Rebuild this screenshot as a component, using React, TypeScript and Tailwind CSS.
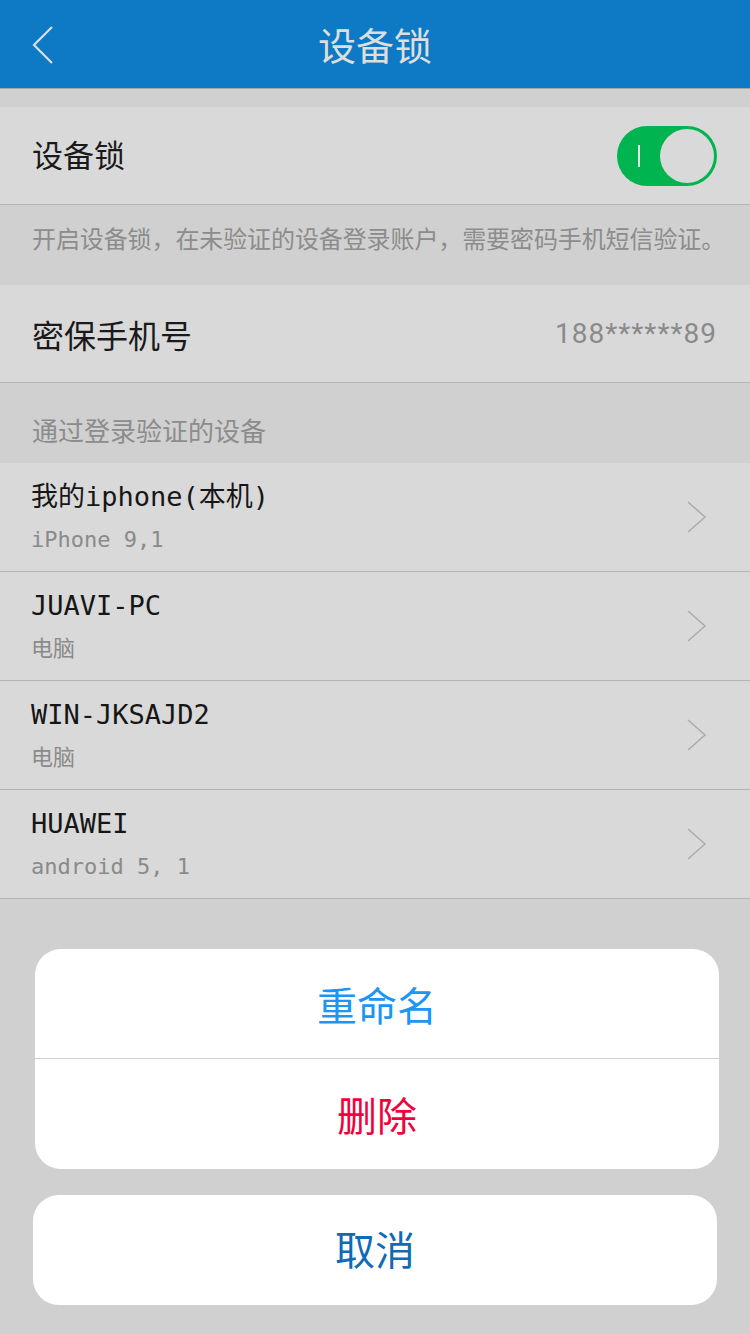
import React from 'react';

interface Device {
    name: string;
    model: string;
}

const devices: Device[] = [
    { name: '我的iphone(本机)', model: 'iPhone 9,1' },
    { name: 'JUAVI-PC', model: '电脑' },
    { name: 'WIN-JKSAJD2', model: '电脑' },
    { name: 'HUAWEI', model: 'android 5, 1' },
];

const cjk = "font-['Noto_Sans_CJK_SC',sans-serif]";
const mono = "font-['DejaVu_Sans_Mono','Noto_Sans_CJK_SC',monospace]";

const Chevron = () => (
    <svg width="22" height="32" viewBox="0 0 22 32" fill="none">
        <path d="M2 1 L19 16 L2 31" stroke="#ababab" strokeWidth="1.5" />
    </svg>
);

const Toggle = () => (
    <div className="relative w-[100px] h-[60px] rounded-full bg-[#00b44f]">
        <div className="absolute left-[21px] top-[19px] w-[2px] h-[22px] bg-[#e6e6e6]" />
        <div className="absolute right-[3px] top-[3px] w-[54px] h-[54px] rounded-full bg-[#d9d9d9]" />
    </div>
);

const App = () => {
    return (
        <div className={`w-[750px] h-[1334px] bg-[#d0d0d0] ${cjk} overflow-hidden`}>
            {/* header */}
            <div className="relative h-[89px] bg-[#0e7ac5] border-b border-[#a8a8a8] flex items-center justify-center">
                <svg className="absolute left-[30px] top-[26px]" width="26" height="38" viewBox="0 0 26 38" fill="none">
                    <path d="M22 1 L4 19 L22 37" stroke="#dedede" strokeWidth="2.2" />
                </svg>
                <span className="text-[38px] text-[#dedede] leading-none">设备锁</span>
            </div>

            <div className="h-[18px]" />

            <div className="h-[98px] bg-[#d9d9d9] border-b border-[#b3b3b3] flex items-center justify-between pl-[32px] pr-[33px]">
                <span className="text-[31px] text-[#1a1a1a] -mt-[3px]">设备锁</span>
                <Toggle />
            </div>

            <div className="h-[80px] pl-[32px] pt-[15px]">
                <p className="text-[24px] text-[#8c8c8c] whitespace-nowrap tracking-[-0.1px]">
                    开启设备锁，在未验证的设备登录账户，需要密码手机短信验证。
                </p>
            </div>

            <div className="h-[98px] bg-[#d9d9d9] border-b border-[#b3b3b3] flex items-center justify-between pl-[32px] pr-[33px]">
                <span className="text-[32px] text-[#1a1a1a]">密保手机号</span>
                <span className="text-[28px] text-[#8a8a8a] font-['Roboto',sans-serif] tracking-[1px]">188******89</span>
            </div>

            <div className="h-[80px] pl-[32px] flex items-end pb-[14px]">
                <span className="text-[26px] text-[#8c8c8c]">通过登录验证的设备</span>
            </div>

            <div>
                {devices.map(d => (
                    <div
                        key={d.name}
                        className="h-[109px] bg-[#d9d9d9] border-b border-[#b3b3b3] flex items-center justify-between pl-[31px] pr-[42px]"
                    >
                        <div className="flex flex-col">
                            <span className={`${mono} text-[27px] leading-[36px] text-[#161616]`}>{d.name}</span>
                            <span className={`${mono} text-[22px] leading-[30px] mt-[10px] text-[#8a8a8a]`}>{d.model}</span>
                        </div>
                        <Chevron />
                    </div>
                ))}
            </div>

            {/* action sheet */}
            <div className="mt-[50px] flex flex-col">
                <div className="ml-[35px] w-[684px] rounded-[26px] bg-white overflow-hidden">
                    <div className="h-[110px] flex items-center justify-center border-b border-[#d0d0d0] text-[40px] text-[#1c96f2]">
                        重命名
                    </div>
                    <div className="h-[110px] flex items-center justify-center text-[40px] text-[#f2003c]">
                        删除
                    </div>
                </div>
                <div className="mt-[26px] ml-[33px] w-[684px] h-[110px] rounded-[26px] bg-white flex items-center justify-center text-[40px] text-[#0f6bb6]">
                    <span className="-mt-[4px]">取消</span>
                </div>
            </div>
        </div>
    );
};

export default App;
